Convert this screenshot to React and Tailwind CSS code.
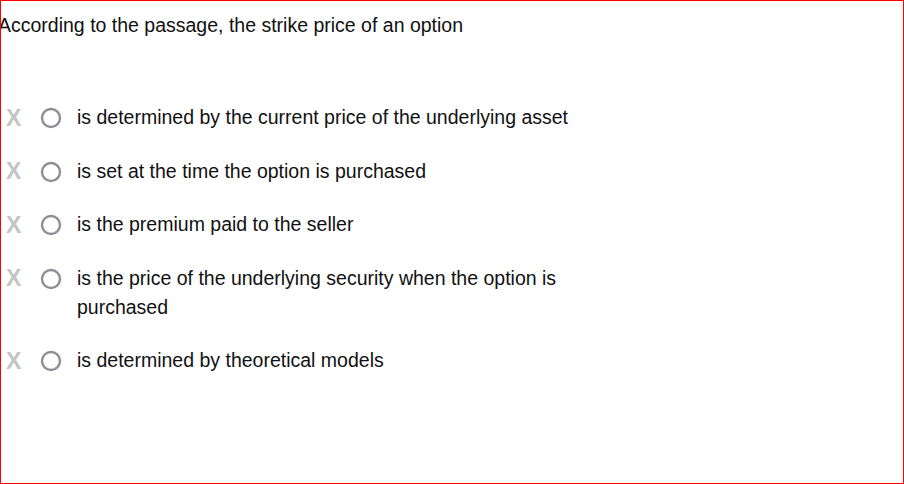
import React from "react";

const options = [
  "is determined by the current price of the underlying asset",
  "is set at the time the option is purchased",
  "is the premium paid to the seller",
  "is the price of the underlying security when the option is purchased",
  "is determined by theoretical models",
];

function Radio() {
  return (
    <svg width="22" height="22" viewBox="0 0 22 22" className="shrink-0">
      <circle cx="11" cy="11" r="9" fill="white" stroke="#8e8e99" strokeWidth="2.4" />
    </svg>
  );
}

export default function App() {
  return (
    <div
      className="relative w-[904px] h-[484px] bg-white overflow-hidden text-[#111]"
      style={{ fontFamily: "'Liberation Sans', Arial, sans-serif" }}
    >
      {/* Question */}
      <div className="pt-[11px] -ml-[2px] text-[19.5px] leading-[28px]">
        According to the passage, the strike price of an option
      </div>

      {/* Choices */}
      <div className="mt-[64px] flex flex-col gap-[23.5px]">
        {options.map((opt) => (
          <div key={opt} className="flex items-start">
            <span className="w-[40px] pl-[6px] h-[30px] flex items-center text-[23px] font-bold text-[#c4c4c4] leading-none">
              X
            </span>
            <span className="w-[37px] h-[30px] flex items-center">
              <Radio />
            </span>
            <span className="w-[500px] text-[19.5px] leading-[29.5px]">{opt}</span>
          </div>
        ))}
      </div>

      {/* frame */}
      <div className="absolute inset-0 border border-[#ff0000] pointer-events-none" />
    </div>
  );
}
